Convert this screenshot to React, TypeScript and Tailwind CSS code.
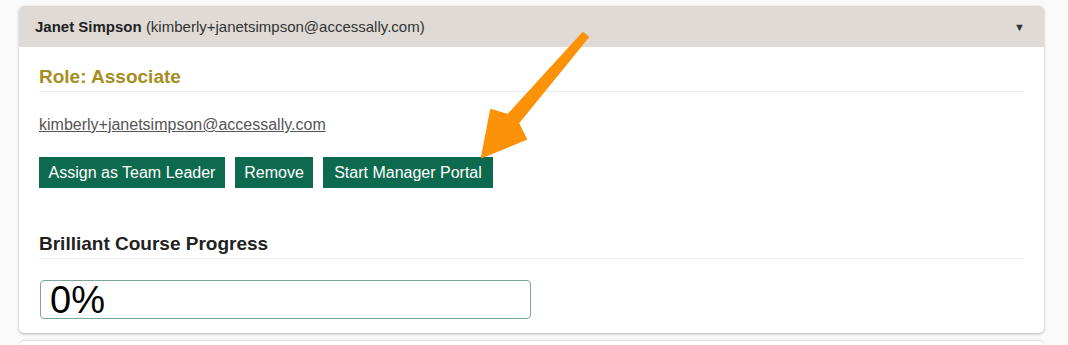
import React from "react";

const buttons = [
    {label: "Assign as Team Leader", w: "w-[186px]"},
    {label: "Remove", w: "w-[78px]"},
    {label: "Start Manager Portal", w: "w-[170px]"},
];

function Arrow() {
    // orange callout arrow pointing at the portal button
    return (
        <svg className="absolute left-0 top-0 pointer-events-none" width="1068" height="345" viewBox="0 0 1068 345">
            <polygon
                points="583,33 588,37 518,123 526,139 482,157 491,110 508,115"
                fill="#fb9208"
                stroke="#fb9208"
                strokeWidth="2"
                strokeLinejoin="round"
            />
        </svg>
    );
}

export default function App() {
    return (
        <div className="relative w-[1068px] h-[345px] overflow-hidden bg-[#fafafa] pt-[6px] pl-[19px]"
             style={{fontFamily: '"Liberation Sans", Arial, sans-serif'}}>
            <div className="w-[1025px] rounded-[5px] bg-white shadow-[0_1px_3px_rgba(0,0,0,0.28)]">
                <div className="flex items-center justify-between h-[41px] bg-[#dfdad6] rounded-t-[5px] pl-[16px] pr-[19px]">
                    <div className="text-[15px] text-[#222] pt-[1px]">
                        <span className="font-bold">Janet Simpson</span>{" "}
                        <span className="text-[#333]">(kimberly+janetsimpson@accessally.com)</span>
                    </div>
                    <span className="text-[11px] text-[#333] leading-none pt-[1px]">▼</span>
                </div>
                <div className="px-[20px] pt-[20px] pb-[14px]">
                    <h3 className="text-[19px] leading-[20px] font-bold text-[#a68d1f] pb-[4px] border-b border-[#ececec]">
                        Role: Associate
                    </h3>
                    <a href="#" className="block mt-[23px] text-[16px] leading-[20px] text-[#555] underline w-fit">
                        kimberly+janetsimpson@accessally.com
                    </a>
                    <div className="flex gap-[10px] mt-[22px]">
                        {buttons.map((b) => (
                            <button key={b.label}
                                    className={`${b.w} h-[31px] bg-[#0e6a4e] text-white text-[16px] flex items-center justify-center`}>
                                {b.label}
                            </button>
                        ))}
                    </div>
                    <h3 className="mt-[45px] text-[19px] leading-[22px] font-bold text-[#222] pb-[3px] border-b border-[#ececec]">
                        Brilliant Course Progress
                    </h3>
                    <div className="mt-[21px] ml-[1px] w-[491px] h-[39px] border border-[#77a898] rounded-[4px] flex items-center pl-[9px]">
                        <span className="text-[38px] leading-none text-black">0%</span>
                    </div>
                </div>
            </div>
            <div className="mt-[8px] w-[1025px] h-[20px] rounded-t-[5px] bg-white shadow-[0_-1px_2px_rgba(0,0,0,0.12)]" />
            <Arrow/>
        </div>
    );
}
